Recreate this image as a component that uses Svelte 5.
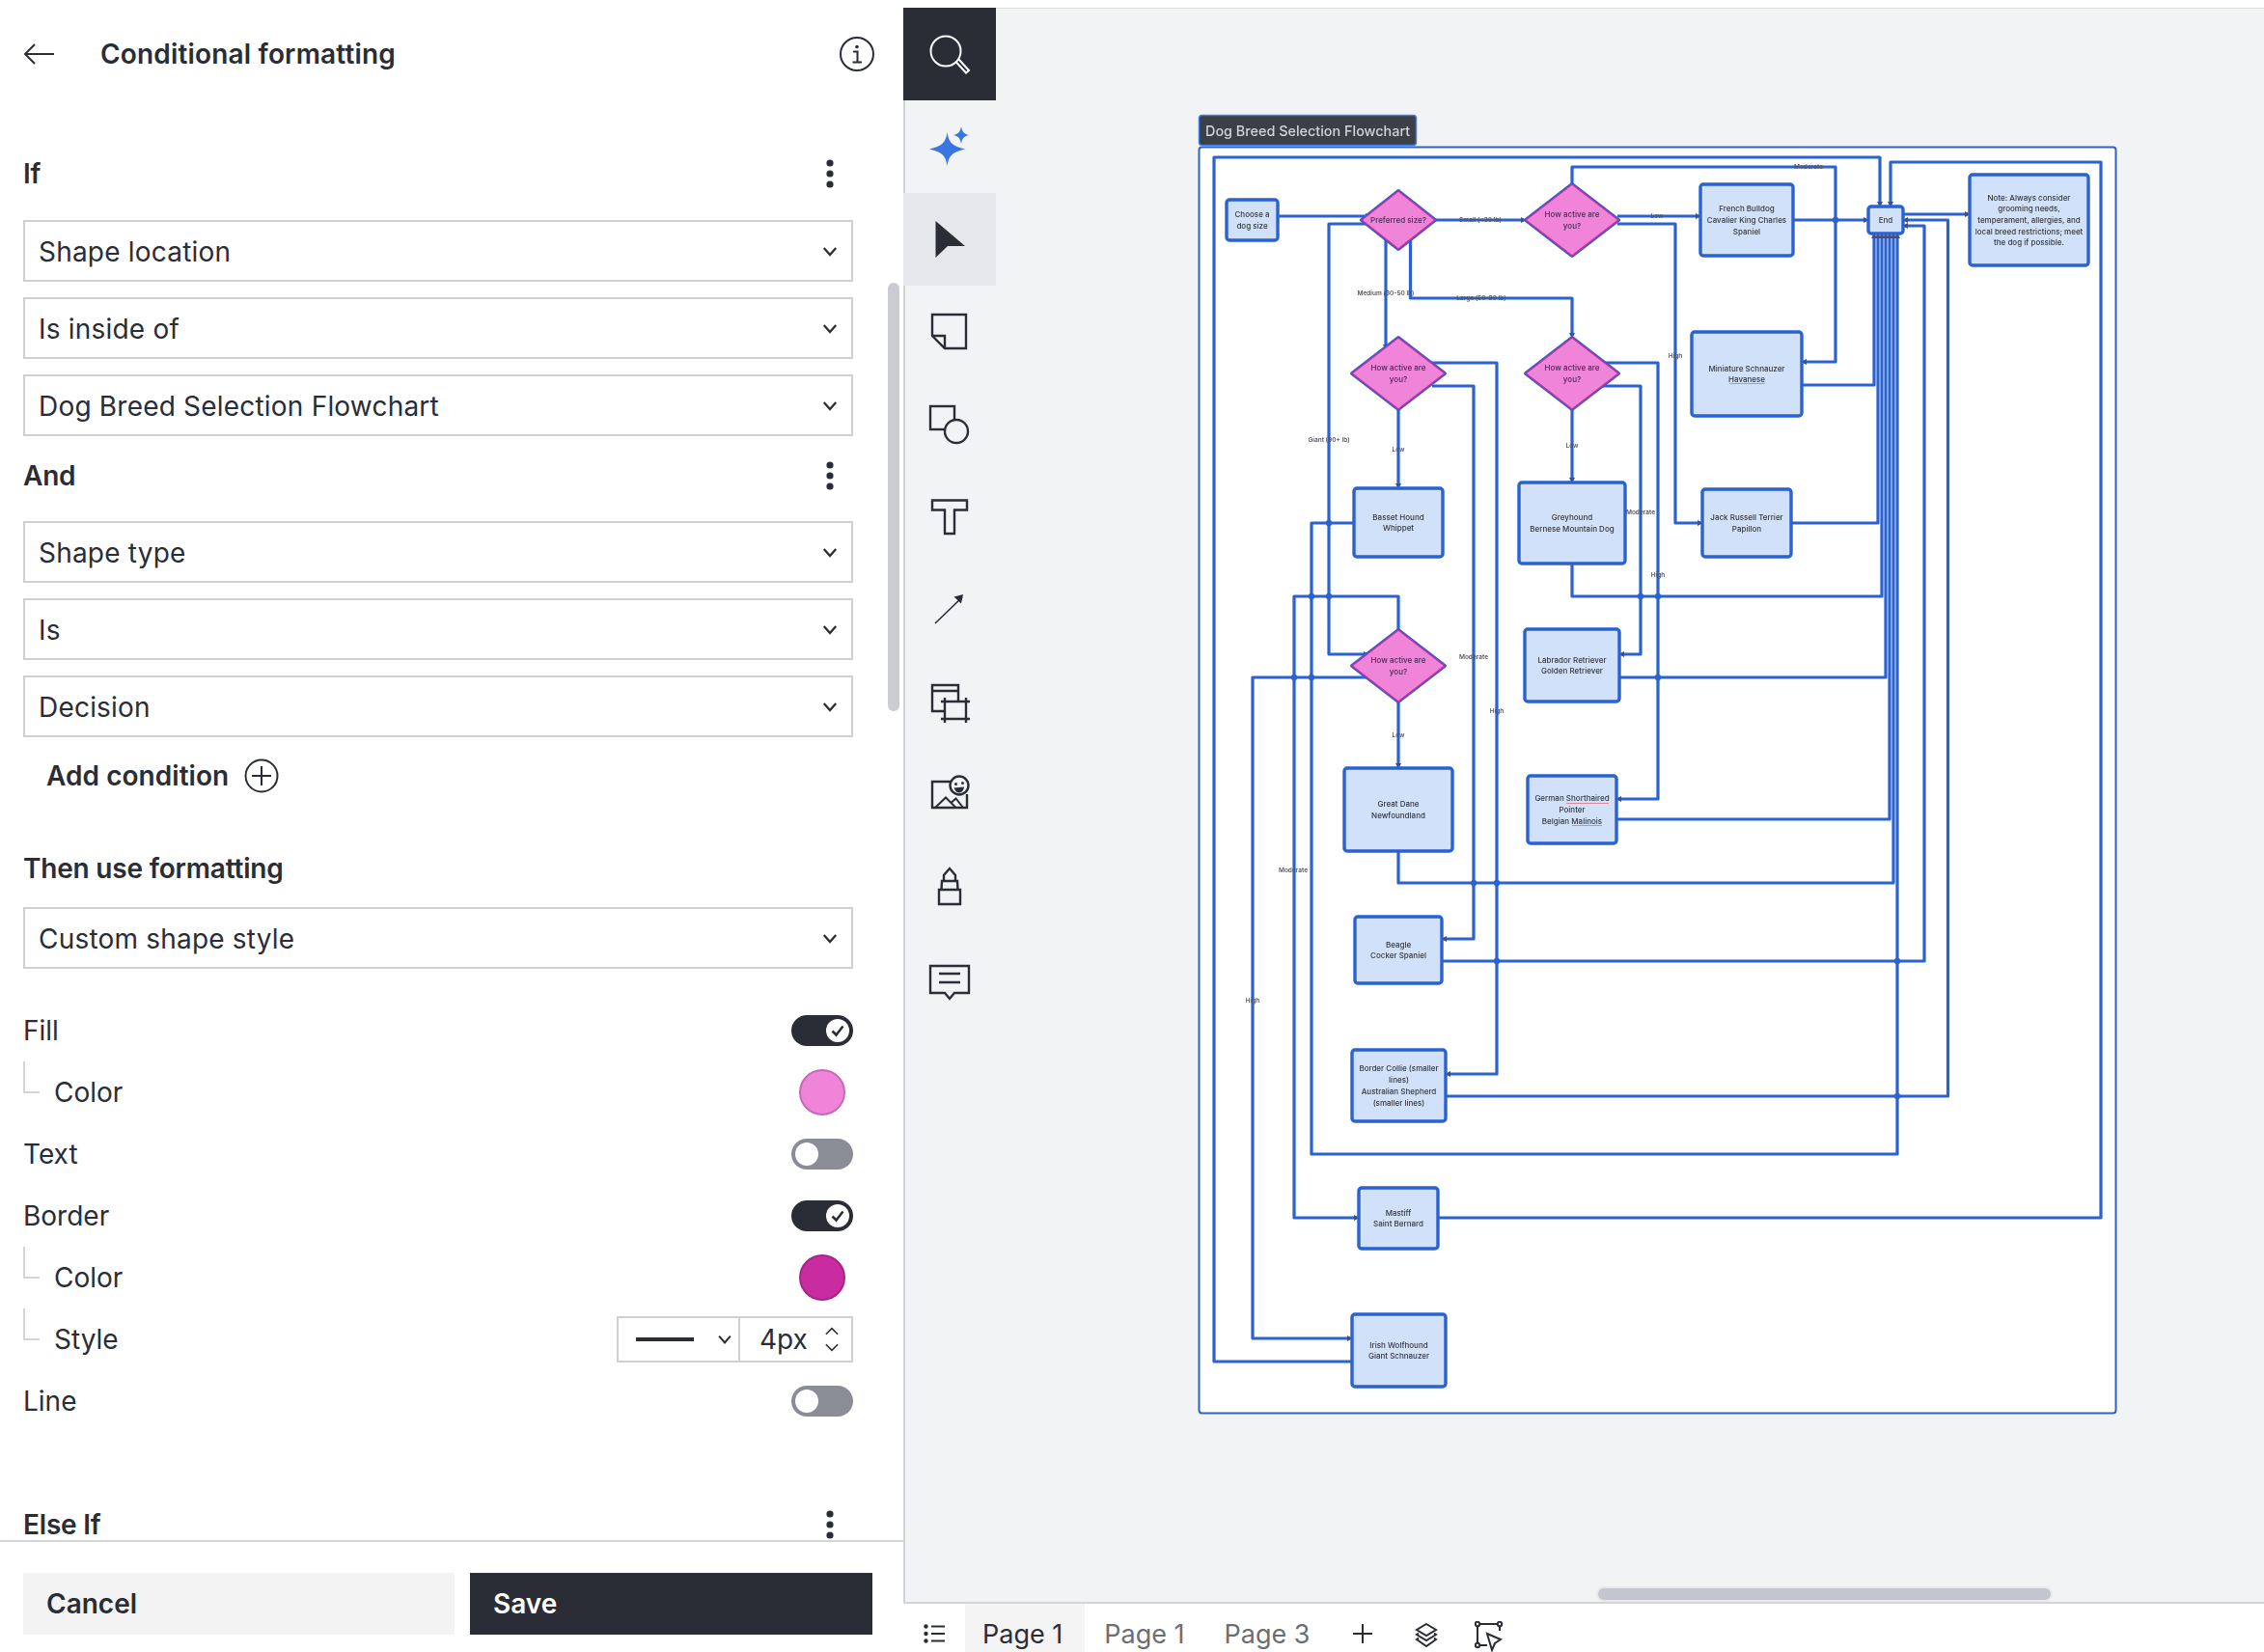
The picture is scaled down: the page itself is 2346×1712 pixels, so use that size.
<script>
  const ifRows = ["Shape location", "Is inside of", "Dog Breed Selection Flowchart"];
  const andRows = ["Shape type", "Is", "Decision"];

  // flowchart data, in page pixels (the svg viewBox starts at the canvas origin)
  const boxes = [
    { x: 1271, y: 207, w: 53, h: 42, lines: ["Choose a", "dog size"] },
    { x: 1762, y: 191, w: 96, h: 74, lines: ["French Bulldog", "Cavalier King Charles", "Spaniel"] },
    { x: 1936, y: 214, w: 36, h: 28, lines: ["End"] },
    { x: 2041, y: 181, w: 123, h: 94, lines: ["Note: Always consider", "grooming needs,", "temperament, allergies, and", "local breed restrictions; meet", "the dog if possible."] },
    { x: 1753, y: 344, w: 114, h: 87, lines: ["Miniature Schnauzer", "Havanese"] },
    { x: 1764, y: 507, w: 92, h: 70, lines: ["Jack Russell Terrier", "Papillon"] },
    { x: 1403, y: 506, w: 92, h: 71, lines: ["Basset Hound", "Whippet"] },
    { x: 1574, y: 500, w: 110, h: 84, lines: ["Greyhound", "Bernese Mountain Dog"] },
    { x: 1580, y: 652, w: 98, h: 75, lines: ["Labrador Retriever", "Golden Retriever"] },
    { x: 1393, y: 796, w: 112, h: 86, lines: ["Great Dane", "Newfoundland"] },
    { x: 1583, y: 804, w: 92, h: 70, lines: ["German Shorthaired", "Pointer", "Belgian Malinois"] },
    { x: 1404, y: 950, w: 90, h: 69, lines: ["Beagle", "Cocker Spaniel"] },
    { x: 1401, y: 1088, w: 97, h: 74, lines: ["Border Collie (smaller", "lines)", "Australian Shepherd", "(smaller lines)"] },
    { x: 1408, y: 1231, w: 82, h: 63, lines: ["Mastiff", "Saint Bernard"] },
    { x: 1401, y: 1362, w: 97, h: 75, lines: ["Irish Wolfhound", "Giant Schnauzer"] }
  ];

  const diamonds = [
    { cx: 1449, cy: 228, rx: 38, ry: 30, lines: ["Preferred size?"] },
    { cx: 1629, cy: 228, rx: 48, ry: 37, lines: ["How active are", "you?"] },
    { cx: 1449, cy: 387, rx: 48, ry: 37, lines: ["How active are", "you?"] },
    { cx: 1629, cy: 387, rx: 48, ry: 37, lines: ["How active are", "you?"] },
    { cx: 1449, cy: 690, rx: 48, ry: 37, lines: ["How active are", "you?"] }
  ];

  const edges = [
    "M1401 1411H1258V163H1948V210",
    "M1629 191V173H1902V375H1871",
    "M1972 222H2037",
    "M1490 1262H2177V168H1959V210",
    "M1324 224H1416",
    "M1487 228H1577",
    "M1676 224H1758",
    "M1676 232H1736V542H1760",
    "M1858 228H1932",
    "M1867 399H1942V246",
    "M1856 542H1946V246",
    "M1436 247V358",
    "M1461.500 247V309H1629V346",
    "M1418 232H1377V678H1414",
    "M1484 376H1551V1113H1502",
    "M1484 400H1527V973H1498",
    "M1449 424V502",
    "M1629 424V496",
    "M1660 376H1718V828H1679",
    "M1660 400H1700V678H1682",
    "M1629 584V618H1950V246",
    "M1678 702H1954V246",
    "M1675 849H1958V246",
    "M1449 882V915H1962V246",
    "M1494 996H1994V234H1976",
    "M1498 1136H2018.500V228H1976",
    "M1403 542H1359V1196H1966V246",
    "M1449 653V618H1341V1262H1404",
    "M1418 702H1298V1387H1397",
    "M1449 727V792"
  ];

  const junctions = [
    [1377, 542], [1377, 618], [1359, 618], [1359, 702], [1341, 702], [1902, 228],
    [1700, 618], [1718, 618], [1718, 702], [1527, 915], [1551, 915], [1551, 996],
    [1966, 996], [1966, 1136]
  ];

  const labels = [
    { x: 1534, y: 228, t: "Small (<30 lb)" },
    { x: 1717, y: 224, t: "Low" },
    { x: 1874, y: 173, t: "Moderate" },
    { x: 1436, y: 304, t: "Medium (30-50 lb)" },
    { x: 1535, y: 309, t: "Large (50-90 lb)" },
    { x: 1736, y: 369, t: "High" },
    { x: 1377, y: 456, t: "Giant (90+ lb)" },
    { x: 1449, y: 466, t: "Low" },
    { x: 1629, y: 462, t: "Low" },
    { x: 1700, y: 531, t: "Moderate" },
    { x: 1718, y: 596, t: "High" },
    { x: 1527, y: 681, t: "Moderate" },
    { x: 1551, y: 737, t: "High" },
    { x: 1449, y: 762, t: "Low" },
    { x: 1340, y: 902, t: "Moderate" },
    { x: 1298, y: 1037, t: "High" }
  ];

  // spellcheck underlines left on the names in the screenshot
  const typos = ["M1792 397.500H1829", "M1623 832.500H1667", "M1629 855.500H1660"];

  const lineGap = 11.7;
  const lineY = (cy, i, n) => cy + (i - (n - 1) / 2) * lineGap;
</script>

{#snippet kebab()}
  <svg class="kebab" width="8" height="30" viewBox="0 0 8 30" aria-hidden="true">
    <circle cx="4" cy="4" r="3.600" /><circle cx="4" cy="15" r="3.600" /><circle cx="4" cy="26" r="3.600" />
  </svg>
{/snippet}

{#snippet chevron()}
  <svg class="chevron" width="16" height="11" viewBox="0 0 18 12" aria-hidden="true">
    <path d="M2 2l7 8 7-8" />
  </svg>
{/snippet}

{#snippet toggle(on)}
  <span class="toggle" class:on>
    <span class="knob">
      {#if on}
        <svg width="24" height="24" viewBox="0 0 24 24"><path d="M6.500 12.500l4 4 7-9" /></svg>
      {/if}
    </span>
  </span>
{/snippet}

<div class="app">
  <aside class="panel">
    <header class="head">
      <svg class="back" width="34" height="24" viewBox="0 0 34 24" aria-hidden="true"><path d="M32 12H3M12 2L2 12l10 10" /></svg>
      <h1>Conditional formatting</h1>
      <svg class="info" width="36" height="36" viewBox="0 0 36 36" aria-hidden="true">
        <circle cx="18" cy="18" r="17" />
        <circle class="dot" cx="18" cy="10.500" r="1.800" />
        <path d="M14 15.500h4.500V26M13.500 26.500h9.500" />
      </svg>
    </header>

    <div class="form">
      <div class="group-head first"><h2>If</h2>{@render kebab()}</div>
      <div class="stack">
        {#each ifRows as row}
          <div class="select"><span>{row}</span>{@render chevron()}</div>
        {/each}
      </div>

      <div class="group-head and"><h2>And</h2>{@render kebab()}</div>
      <div class="stack">
        {#each andRows as row}
          <div class="select"><span>{row}</span>{@render chevron()}</div>
        {/each}
      </div>

      <div class="add">
        <span>Add condition</span>
        <svg width="36" height="36" viewBox="0 0 36 36" aria-hidden="true">
          <circle cx="18" cy="18" r="16.500" /><path d="M18 8v20M8 18h20" />
        </svg>
      </div>

      <h2 class="then">Then use formatting</h2>
      <div class="select"><span>Custom shape style</span>{@render chevron()}</div>

      <div class="rows">
        <div class="row"><span>Fill</span>{@render toggle(true)}</div>
        <div class="row sub"><span>Color</span><span class="swatch light"></span></div>
        <div class="row"><span>Text</span>{@render toggle(false)}</div>
        <div class="row"><span>Border</span>{@render toggle(true)}</div>
        <div class="row sub"><span>Color</span><span class="swatch deep"></span></div>
        <div class="row sub">
          <span>Style</span>
          <div class="style-box">
            <div class="line-pick">
              <span class="stroke"></span>
              <svg width="16" height="10" viewBox="0 0 18 12" aria-hidden="true"><path d="M2 2l7 8 7-8" /></svg>
            </div>
            <div class="px-pick">
              <span>4px</span>
              <svg width="16" height="28" viewBox="0 0 18 32" aria-hidden="true"><path d="M2 10l7-7 7 7M2 22l7 7 7-7" /></svg>
            </div>
          </div>
        </div>
        <div class="row"><span>Line</span>{@render toggle(false)}</div>
      </div>

      <div class="group-head else"><h2>Else If</h2>{@render kebab()}</div>
    </div>

    <div class="scrollbar"></div>

    <footer class="foot">
      <button class="btn cancel">Cancel</button>
      <button class="btn save">Save</button>
    </footer>
  </aside>

  <div class="main">
    <div class="top-strip"></div>
    <div class="work">
      <nav class="tools">
        <div class="tool dark">
          <svg viewBox="0 0 48 48" aria-hidden="true">
            <circle cx="20" cy="21" r="15.500" />
            <path d="M31 32.500l10 11 3-2.500-10.500-11.500" />
          </svg>
        </div>
        <div class="tool">
          <svg viewBox="0 0 48 48" aria-hidden="true">
            <path class="spark" d="M21.500 9c1.500 11 5.500 14.500 18.500 17.500-13 3-17 6.500-18.500 17.500-1.500-11-5.500-14.500-18.500-17.500 13-3 17-6.500 18.500-17.500z" />
            <path class="spark" d="M36 3c.8 5 2.500 7.700 8 9-5.500 1.300-7.200 4-8 9-.8-5-2.500-7.700-8-9 5.500-1.300 7.200-4 8-9z" />
          </svg>
        </div>
        <div class="tool active">
          <svg viewBox="0 0 48 48" aria-hidden="true">
            <path class="solid" d="M9.500 5L40 31H22L9.500 43z" />
          </svg>
        </div>
        <div class="tool">
          <svg viewBox="0 0 48 48" aria-hidden="true">
            <path d="M6 6h35v35H19L6 28zM6 28h13v13" />
          </svg>
        </div>
        <div class="tool">
          <svg viewBox="0 0 48 48" aria-hidden="true">
            <rect x="4" y="5" width="25" height="24" />
            <circle class="fill-bg" cx="31" cy="31" r="12" />
          </svg>
        </div>
        <div class="tool">
          <svg viewBox="0 0 48 48" aria-hidden="true">
            <path d="M6 6.500h36v10H29V41H19V16.500H6z" />
          </svg>
        </div>
        <div class="tool">
          <svg viewBox="0 0 48 48" aria-hidden="true">
            <path class="thin" d="M9 38L37 11" />
            <path class="solid" d="M38 8l-2 9.500-7.500-7z" />
          </svg>
        </div>
        <div class="tool">
          <svg viewBox="0 0 48 48" aria-hidden="true">
            <path d="M33 23V6H6v27h13M6 12h27" />
            <path d="M19 19v26M41 19v26M15 23h30M15 41h30" />
          </svg>
        </div>
        <div class="tool">
          <svg viewBox="0 0 48 48" aria-hidden="true">
            <path d="M25 10H6v27h36V23" />
            <path class="mid" d="M9 37l11-10.500 10.500 10.500M26 31.500l4.500-4L38 37" />
            <circle class="fill-bg" cx="34" cy="14" r="9.500" />
            <circle class="solid" cx="30.500" cy="12.500" r="1.500" /><circle class="solid" cx="37.500" cy="11.500" r="1.500" />
            <path class="solid" d="M28.500 16.500l10.500-1c-.5 4-3 6-5.500 6s-4-2.500-5-5z" />
          </svg>
        </div>
        <div class="tool">
          <svg viewBox="0 0 48 48" aria-hidden="true">
            <path d="M13 41V26h22v15zM15.500 26L16 17h16l.5 9M18 17v-6l6-7 6 7v6" />
          </svg>
        </div>
        <div class="tool">
          <svg viewBox="0 0 48 48" aria-hidden="true">
            <path d="M4 9h40v28H29l-5 6-5-6H4zM13 17h22M13 26h22" />
          </svg>
        </div>
      </nav>

      <section class="canvas">
        <svg class="chart" width="1314" height="1652" viewBox="1032 8 1314 1652">
          <defs>
            <marker id="tip" markerUnits="userSpaceOnUse" markerWidth="7" markerHeight="7" refX="1" refY="3.500" orient="auto">
              <path d="M0 .5L6 3.500 0 6.500z" fill="#3c4f86" />
            </marker>
          </defs>

          <rect class="title-tag" x="1242.500" y="119.500" width="225" height="31" rx="3" />
          <text class="title-text soft" x="1249" y="135.500">Dog Breed Selection Flowchart</text>
          <rect class="frame" x="1242.500" y="152.500" width="950" height="1312" rx="3" />

          {#each edges as d}
            <path class="edge" {d} marker-end="url(#tip)" />
          {/each}
          {#each junctions as [x, y]}
            <circle class="junction" cx={x} cy={y} r="3.200" />
          {/each}

          {#each boxes as b}
            <rect class="box" x={b.x} y={b.y} width={b.w} height={b.h} rx="3" />
            {#each b.lines as line, i}
              <text class="node-text soft" x={b.x + b.w / 2} y={lineY(b.y + b.h / 2, i, b.lines.length)}>{line}</text>
            {/each}
          {/each}

          {#each diamonds as d}
            {@const pts = `${d.cx},${d.cy - d.ry} ${d.cx + d.rx},${d.cy} ${d.cx},${d.cy + d.ry} ${d.cx - d.rx},${d.cy}`}
            <polygon class="dia-outer" points={pts} />
            <polygon class="dia-inner" points={pts} />
            {#each d.lines as line, i}
              <text class="node-text dia-text soft" x={d.cx} y={lineY(d.cy, i, d.lines.length)}>{line}</text>
            {/each}
          {/each}

          {#each typos as d}
            <path class="typo" {d} />
          {/each}

          {#each labels as l}
            <text class="edge-label soft" x={l.x} y={l.y}>{l.t}</text>
          {/each}
        </svg>
        <div class="hscroll"></div>
      </section>
    </div>

    <footer class="pages">
      <svg class="list-icon" width="24" height="20" viewBox="0 0 24 20" aria-hidden="true">
        <circle cx="2.500" cy="2.500" r="2.200" /><circle cx="2.500" cy="10" r="2.200" /><circle cx="2.500" cy="17.500" r="2.200" />
        <path d="M8 2.500h14M8 10h14M8 17.500h14" />
      </svg>
      <span class="tab current">Page 1</span>
      <span class="tab">Page 1</span>
      <span class="tab">Page 3</span>
      <svg class="page-icon plus" width="22" height="22" viewBox="0 0 22 22" aria-hidden="true"><path d="M11 1v20M1 11h20" /></svg>
      <svg class="page-icon layers" width="24" height="26" viewBox="0 0 24 26" aria-hidden="true">
        <path d="M12 1l10 6-10 6-10-6zM4 10.500L2 12l10 6 10-6-2-1.500M4 15.500L2 17l10 7 10-7-2-1.500" />
      </svg>
      <svg class="page-icon select-icon" width="30" height="32" viewBox="0 0 30 32" aria-hidden="true">
        <path d="M3 5v18M5 3h19M26 5v5M5 25h8" />
        <circle cx="3" cy="3" r="2.200" /><circle cx="26" cy="3" r="2.200" /><circle cx="3" cy="25" r="2.200" />
        <path d="M13 13l14 6-6 4-3 7z" />
      </svg>
    </footer>
  </div>
</div>

<style>
  :global(body) {
    margin: 0;
    font-family: Inter, "Liberation Sans", sans-serif;
    color: #2a2d35;
  }

  .app {
    display: flex;
    width: 2346px;
    height: 1712px;
    overflow: hidden;
  }

  /* left panel */
  .panel {
    position: relative;
    width: 936px;
    flex: none;
    display: flex;
    flex-direction: column;
    background: #fff;
  }

  .head {
    display: flex;
    align-items: center;
    height: 112px;
    padding: 0 30px 0 24px;
    flex: none;
    box-sizing: border-box;
  }

  .head h1 {
    margin: 0 0 0 46px;
    flex: 1;
    font-size: 28px;
    font-weight: 600;
    letter-spacing: 0.17px;
  }

  .back path,
  .info path,
  .info circle {
    fill: none;
    stroke: #2a2d35;
    stroke-width: 2;
  }

  .info .dot {
    fill: #2a2d35;
    stroke: none;
  }

  .form {
    flex: 1;
    min-height: 0;
    overflow: hidden;
    padding: 0 52px 0 24px;
  }

  h2 {
    margin: 0;
    font-size: 28px;
    font-weight: 600;
    letter-spacing: -0.2px;
  }

  .group-head {
    display: flex;
    align-items: center;
    justify-content: space-between;
    padding-right: 20px;
    height: 40px;
  }

  .group-head.first {
    margin-top: 48px;
    margin-bottom: 28px;
  }

  .group-head.and {
    margin-top: 21px;
    margin-bottom: 27px;
  }

  .group-head.else {
    margin-top: 76px;
  }

  .kebab circle {
    fill: #2a2d35;
  }

  .stack {
    display: flex;
    flex-direction: column;
    gap: 16px;
  }

  .select {
    display: flex;
    align-items: center;
    justify-content: space-between;
    box-sizing: border-box;
    height: 64px;
    padding: 0 14px 0 14px;
    border: 2px solid #cfd0d4;
    font-size: 28px;
    letter-spacing: 0.2px;
  }

  .select span {
    padding-top: 1px;
  }

  .chevron path,
  .line-pick path,
  .px-pick path {
    fill: none;
    stroke: #2a2d35;
    stroke-width: 2.500;
  }

  .add {
    display: flex;
    align-items: center;
    gap: 16px;
    height: 40px;
    margin-top: 20px;
    padding-left: 24px;
    font-size: 28px;
    font-weight: 600;
    letter-spacing: 0.05px;
  }

  .add circle,
  .add path {
    fill: none;
    stroke: #2a2d35;
    stroke-width: 2;
  }

  .then {
    margin-top: 56px;
    margin-bottom: 20px;
    line-height: 40px;
  }

  .rows {
    margin-top: 32px;
  }

  .row {
    position: relative;
    display: flex;
    align-items: center;
    justify-content: space-between;
    height: 64px;
    font-size: 28px;
  }

  .row.sub {
    padding-left: 32px;
  }

  .row.sub::before {
    content: "";
    position: absolute;
    left: 0;
    top: 0;
    width: 15px;
    height: 31px;
    border-left: 2px solid #d4d5d9;
    border-bottom: 2px solid #d4d5d9;
  }

  .toggle {
    display: flex;
    align-items: center;
    box-sizing: border-box;
    width: 64px;
    height: 32px;
    padding: 0 4px;
    border-radius: 16px;
    background: #8a8d95;
  }

  .toggle.on {
    justify-content: flex-end;
    background: #2a2d35;
  }

  .knob {
    display: block;
    width: 24px;
    height: 24px;
    border-radius: 50%;
    background: #fff;
  }

  .knob svg {
    display: block;
  }

  .knob path {
    fill: none;
    stroke: #2a2d35;
    stroke-width: 2.500;
  }

  .swatch {
    box-sizing: border-box;
    width: 48px;
    height: 48px;
    margin-right: 8px;
    border-radius: 50%;
    border: 2px solid;
  }

  .swatch.light {
    background: #ef84d8;
    border-color: #c768b8;
  }

  .swatch.deep {
    background: #c82ca0;
    border-color: #a52585;
  }

  .style-box {
    display: flex;
    box-sizing: border-box;
    width: 245px;
    height: 48px;
    border: 2px solid #cfd0d4;
  }

  .line-pick {
    display: flex;
    align-items: center;
    justify-content: space-between;
    box-sizing: border-box;
    width: 126px;
    padding: 0 6px 0 18px;
    border-right: 2px solid #cfd0d4;
  }

  .stroke {
    width: 60px;
    height: 4px;
    background: #2a2d35;
  }

  .px-pick {
    flex: 1;
    display: flex;
    align-items: center;
    justify-content: space-between;
    padding: 0 12px 0 20px;
  }

  .px-pick path {
    stroke-width: 1.800;
  }

  .scrollbar {
    position: absolute;
    left: 920px;
    top: 293px;
    width: 12px;
    height: 444px;
    border-radius: 6px;
    background: #cbccd2;
  }

  .foot {
    flex: none;
    display: grid;
    grid-template-columns: 447px 417px;
    gap: 16px;
    height: 116px;
    box-sizing: border-box;
    padding: 32px 0 18px 24px;
    border-top: 2px solid #d4d5d9;
    background: #fff;
  }

  .btn {
    border: none;
    padding: 0 24px;
    text-align: left;
    font: 600 28px Inter, "Liberation Sans", sans-serif;
  }

  .cancel {
    background: #f3f3f3;
    color: #2a2d35;
  }

  .save {
    background: #2a2d35;
    color: #fff;
  }

  /* right side */
  .main {
    flex: 1;
    min-width: 0;
    display: flex;
    flex-direction: column;
    background: #fff;
  }

  .top-strip {
    height: 8px;
    flex: none;
  }

  .work {
    flex: 1;
    min-height: 0;
    display: flex;
    border-bottom: 2px solid #d4d5d9;
  }

  .tools {
    width: 96px;
    flex: none;
    background: #f2f3f5;
    box-shadow: inset 2px 0 #d0d2d8;
  }

  .tool {
    display: flex;
    align-items: center;
    justify-content: center;
    height: 96px;
  }

  .tool svg {
    width: 48px;
    height: 48px;
    fill: none;
    stroke: #2a2d35;
    stroke-width: 2.400;
  }

  .tool .thin {
    stroke-width: 1.600;
  }

  .tool .mid {
    stroke-width: 2;
  }

  .tool .solid {
    fill: #2a2d35;
    stroke: none;
  }

  .tool .fill-bg {
    fill: #f2f3f5;
  }

  .tool .spark {
    fill: #3a75e4;
    stroke: none;
  }

  .tool.dark {
    background: #2a2d35;
  }

  .tool.dark svg {
    stroke: #fff;
    stroke-width: 2;
  }

  .tool.active {
    background: #e6e7ea;
  }

  .canvas {
    position: relative;
    flex: 1;
    min-width: 0;
    background: #f2f3f5;
    box-shadow: inset 0 1px #dcdde0;
  }

  .chart {
    position: absolute;
    left: 0;
    top: 0;
  }

  .soft {
    filter: blur(0.3px);
  }

  .title-tag {
    fill: #3b3f46;
    stroke: #3f7ce0;
    stroke-width: 1.500;
  }

  .title-text {
    fill: #d2d4d8;
    font-size: 14.400px;
    font-weight: 500;
    dominant-baseline: central;
  }

  .frame {
    fill: #fff;
    stroke: #2f62c8;
    stroke-width: 2;
  }

  .edge {
    fill: none;
    stroke: #2a62d0;
    stroke-width: 3.200;
    stroke-linejoin: round;
  }

  .junction {
    fill: #2a62d0;
  }

  .box {
    fill: #d2e1fa;
    stroke: #2a62d0;
    stroke-width: 3.400;
  }

  .dia-outer {
    fill: none;
    stroke: #2a62d0;
    stroke-width: 4;
    stroke-linejoin: round;
  }

  .dia-inner {
    fill: #ef84d8;
    stroke: #c82ca0;
    stroke-width: 1.500;
    stroke-linejoin: round;
  }

  .node-text {
    fill: #33363e;
    font-size: 8px;
    font-weight: 500;
    text-anchor: middle;
    dominant-baseline: central;
  }

  .dia-text {
    fill: #4a2c55;
  }

  .typo {
    fill: none;
    stroke: #e07080;
    stroke-width: 0.800;
  }

  .edge-label {
    fill: #55585f;
    font-size: 6.500px;
    font-weight: 600;
    text-anchor: middle;
    dominant-baseline: central;
  }

  .hscroll {
    position: absolute;
    left: 622px;
    bottom: 0;
    width: 473px;
    height: 16px;
    box-sizing: border-box;
    border-radius: 8px;
    background: #c3c6cf;
    border: 2px solid #e8e9ec;
  }

  .pages {
    flex: none;
    display: flex;
    align-items: center;
    height: 50px;
    padding-left: 21px;
  }

  .pages svg {
    margin-top: 12px;
  }

  .list-icon circle {
    fill: #2a2d35;
  }

  .list-icon path,
  .page-icon path,
  .page-icon circle {
    fill: none;
    stroke: #2a2d35;
    stroke-width: 2;
  }

  .tab {
    display: flex;
    align-items: center;
    box-sizing: border-box;
    height: 50px;
    padding: 12px 20px 0;
    font-size: 27px;
    color: #6b6e75;
  }

  .list-icon + .tab {
    margin-left: 19px;
    padding-left: 18px;
    padding-right: 23px;
  }

  .tab.current {
    color: #2a2d35;
    background: #f4f4f4;
  }

  .tab + .tab + .tab {
    padding-left: 21px;
  }

  .page-icon.plus {
    margin-left: 23px;
  }

  .page-icon.layers {
    margin-left: 43px;
    margin-top: 16px;
  }

  .page-icon.select-icon {
    margin-left: 38px;
    margin-top: 18px;
  }
</style>
